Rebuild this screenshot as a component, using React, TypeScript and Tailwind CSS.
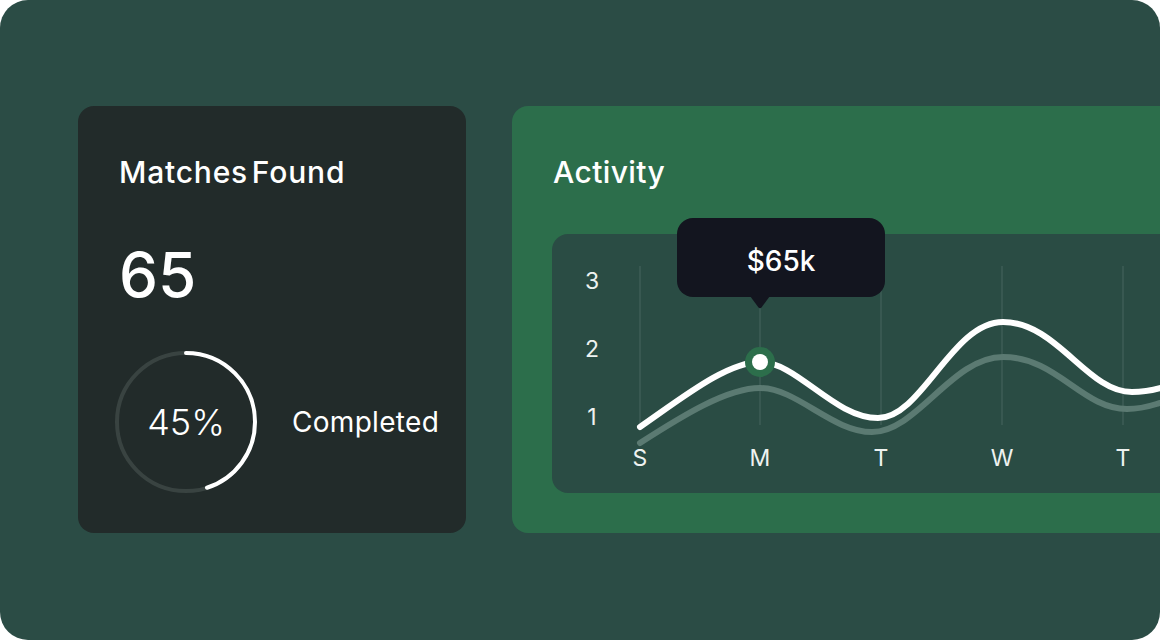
const FONT = "font-['Inter','Liberation_Sans',sans-serif]";

const days = [
  { label: "S", x: 88 },
  { label: "M", x: 208 },
  { label: "T", x: 329 },
  { label: "W", x: 450 },
  { label: "T", x: 571 },
];

const ticks = [
  { label: "3", y: 47 },
  { label: "2", y: 115 },
  { label: "1", y: 183 },
];

function ProgressRing({ percent }: { percent: number }) {
  const r = 69;
  const c = 2 * Math.PI * r;
  return (
    <div className="relative w-[144px] h-[144px] shrink-0">
      <svg width="144" height="144" viewBox="0 0 144 144" className="block -rotate-90">
        <circle cx="72" cy="72" r={r} fill="none" stroke="#394341" strokeWidth="4" />
        <circle
          cx="72"
          cy="72"
          r={r}
          fill="none"
          stroke="#ffffff"
          strokeWidth="4"
          strokeLinecap="round"
          strokeDasharray={`${(c * percent) / 100} ${c}`}
        />
      </svg>
      <div className="absolute inset-0 flex items-center justify-center text-[36px] leading-none font-light text-white">
        {percent}%
      </div>
    </div>
  );
}

function ActivityChart() {
  return (
    <div className="relative mt-[44px] h-[259px] w-[640px] rounded-[16px] bg-[#2a4c44]">
      <svg width="640" height="259" viewBox="0 0 640 259" className="block">
        {days.map((d, i) => (
          <line key={i} x1={d.x} y1="32" x2={d.x} y2="191" stroke="#3e5d56" strokeWidth="1.5" />
        ))}
        <path
          d="M88,209 C130,182 175,154 208,154 C245,154 280,198 320,198 C365,198 400,123 451,123 C505,123 530,175 575,175 C595,175 612,168 640,156"
          fill="none"
          stroke="#5b7a72"
          strokeWidth="6"
          strokeLinecap="round"
        />
        <path
          d="M88,193 C130,164 175,128 208,128 C245,128 282,184 326,184 C370,184 400,88 451,88 C505,88 535,158 580,158 C600,158 618,152 640,142"
          fill="none"
          stroke="#ffffff"
          strokeWidth="6"
          strokeLinecap="round"
        />
        <circle cx="208" cy="128" r="15" fill="#2c6e4b" />
        <circle cx="208" cy="128" r="8" fill="#ffffff" />
        {ticks.map((t) => (
          <text
            key={t.label}
            x="40"
            y={t.y}
            textAnchor="middle"
            dominantBaseline="central"
            fill="#eef2f0"
            fontSize="23"
            fontFamily="Inter, 'Liberation Sans', sans-serif"
          >
            {t.label}
          </text>
        ))}
        {days.map((d, i) => (
          <text
            key={i}
            x={d.x}
            y="224"
            textAnchor="middle"
            dominantBaseline="central"
            fill="#eef2f0"
            fontSize="23"
            fontFamily="Inter, 'Liberation Sans', sans-serif"
          >
            {d.label}
          </text>
        ))}
      </svg>

      {/* tooltip */}
      <div className="absolute left-[125px] top-[-16px] w-[208px] h-[79px] rounded-[16px] bg-[#13151f] flex items-center justify-center pt-[6px] text-[28px] font-medium text-white">
        $65k
      </div>
      <svg width="20" height="13" viewBox="0 0 20 13" className="absolute left-[198px] top-[62px]">
        <path d="M0,0 L20,0 L11.5,11.5 Q10,13 8.5,11.5 Z" fill="#13151f" />
      </svg>
    </div>
  );
}

export default function App() {
  return (
    <div className={`w-[1160px] h-[640px] bg-white ${FONT}`}>
      <div className="w-full h-full rounded-[28px] bg-[#2b4c45] overflow-hidden flex items-start gap-[46px] pt-[106px] pl-[78px]">
        {/* Matches card */}
        <div className="w-[388px] h-[427px] shrink-0 rounded-[16px] bg-[#222b2a] pt-[48px] pl-[41px] flex flex-col">
          <h2 className="text-[30px] leading-[36px] font-medium tracking-[0.8px] [word-spacing:-5px] text-white">
            Matches Found
          </h2>
          <div className="mt-[54px] text-[62px] leading-[62px] font-medium text-white">65</div>
          <div className="mt-[44px] -ml-[5px] flex items-center gap-[34px]">
            <ProgressRing percent={45} />
            <span className="text-[28px] tracking-[0.3px] text-white">Completed</span>
          </div>
        </div>

        {/* Activity card */}
        <div className="w-[700px] h-[427px] shrink-0 rounded-[16px] bg-[#2c6e4b] pt-[48px] pl-[40px]">
          <h2 className="pl-[1px] text-[30px] leading-[36px] font-medium tracking-[0.4px] text-white">Activity</h2>
          <ActivityChart />
        </div>
      </div>
    </div>
  );
}
